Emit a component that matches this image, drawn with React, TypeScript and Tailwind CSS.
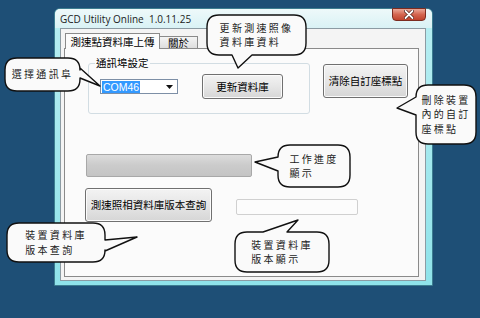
import React from 'react';

type Side = 'top' | 'right' | 'bottom' | 'left';

interface BubbleProps {
    x: number;
    y: number;
    w: number;
    h: number;
    side: Side;
    b1: number;
    b2: number;
    tip: [number, number];
    lines: string[];
}

const uiFont = { fontFamily: '"Noto Sans CJK TC", "Noto Sans", sans-serif' };

// rounded box with a wedge tail on one side
function bubblePath(w: number, h: number, r: number, side: Side, b1: number, b2: number, tx: number, ty: number) {
    let d = `M ${r} 0 `;
    if (side === 'top') d += `L ${b1} 0 L ${tx} ${ty} L ${b2} 0 `;
    d += `L ${w - r} 0 Q ${w} 0 ${w} ${r} `;
    if (side === 'right') d += `L ${w} ${b1} L ${tx} ${ty} L ${w} ${b2} `;
    d += `L ${w} ${h - r} Q ${w} ${h} ${w - r} ${h} `;
    if (side === 'bottom') d += `L ${b2} ${h} L ${tx} ${ty} L ${b1} ${h} `;
    d += `L ${r} ${h} Q 0 ${h} 0 ${h - r} `;
    if (side === 'left') d += `L 0 ${b2} L ${tx} ${ty} L 0 ${b1} `;
    d += `L 0 ${r} Q 0 0 ${r} 0 Z`;
    return d;
}

function Bubble({ x, y, w, h, side, b1, b2, tip, lines }: BubbleProps) {
    return (
        <div className="absolute z-20" style={{ left: x, top: y, width: w, height: h }}>
            <svg className="absolute left-0 top-0 overflow-visible" width={w} height={h}>
                <path
                    d={bubblePath(w, h, 12, side, b1, b2, tip[0], tip[1])}
                    fill="#fafafa"
                    stroke="#111"
                    strokeWidth={1.4}
                    strokeLinejoin="round"
                />
            </svg>
            <div className="relative flex h-full w-full items-center justify-center">
                <div className="text-[10px] leading-[14.5px] tracking-[2.3px] text-[#1a1a1a]" style={uiFont}>
                    {lines.map((l) => (
                        <div key={l}>{l}</div>
                    ))}
                </div>
            </div>
        </div>
    );
}

function WinButton({ label, className }: { label: string; className: string }) {
    return (
        <div
            className={`flex items-center justify-center rounded-[3px] border border-[#707070] bg-gradient-to-b from-[#f3f3f3] via-[#e6e6e6] to-[#d6d6d6] text-[10.5px] text-black shadow-[inset_0_0_0_1px_#fbfbfb] ${className}`}
            style={uiFont}
        >
            {label}
        </div>
    );
}

export default function App() {
    return (
        <div className="relative h-[318px] w-[480px] overflow-hidden bg-[#1e4f76] pl-[54px] pt-[8px]">
            {/* window frame */}
            <div className="flex h-[278px] w-[379px] flex-col rounded-t-[6px] border border-[#3d7d90] bg-gradient-to-b from-[#b8eef2] to-[#8fe3ea]">
                {/* title bar */}
                <div className="flex h-[19px] justify-between rounded-t-[5px] bg-gradient-to-b from-[#eef9fa] to-[#d9f2f5] pl-[5px]">
                    <span
                        className="whitespace-pre pt-[3px] text-[10px] leading-[14px] text-[#1b1b1b]"
                        style={{ fontFamily: '"Open Sans", "Noto Sans", sans-serif' }}
                    >
                        GCD Utility Online  1.0.11.25
                    </span>
                    <div className="-mt-px mr-[6px] flex h-[13px] w-[34px] items-center justify-center rounded-b-[4px] border border-[#7b2c20] bg-gradient-to-b from-[#eaa797] via-[#d4654f] to-[#c0432c]">
                        <svg width="10" height="9" viewBox="0 0 10 9">
                            <path d="M1.5 1 L8.5 8 M8.5 1 L1.5 8" stroke="#4a1a12" strokeWidth="3.2" strokeLinecap="round" />
                            <path d="M1.5 1 L8.5 8 M8.5 1 L1.5 8" stroke="#ffffff" strokeWidth="1.8" strokeLinecap="round" />
                        </svg>
                    </div>
                </div>

                {/* client area */}
                <div className="ml-[5px] flex h-[253px] w-[366px] flex-col border border-[#8c9ba3] bg-[#f4f4f4] pl-[3px] pt-[4px]">
                    {/* tab strip */}
                    <div className="flex h-[15px] items-end pl-px text-[10.5px] text-black" style={uiFont}>
                        <div className="relative z-10 -mb-px flex h-[16px] w-[95px] items-center justify-center border border-b-0 border-[#8a8a8a] bg-[#fbfbfb] leading-[12px]">
                            測速點資料庫上傳
                        </div>
                        <div className="flex h-[12px] w-[38px] items-center justify-center border border-l-0 border-b-0 border-[#8a8a8a] bg-gradient-to-b from-[#f4f4f4] to-[#dedede] leading-[11px]">
                            關於
                        </div>
                    </div>

                    {/* tab pane */}
                    <div className="h-[229px] w-[355px] border border-[#8a8a8a] bg-[#fbfbfb]">
                        <div className="flex items-start">
                            <div className="ml-[23px] mt-[14px] h-[51px] w-[222px] rounded-[3px] border border-[#d2dde3]">
                                <div
                                    className="-mt-[7px] ml-[6px] w-fit bg-[#fbfbfb] px-px text-[10.5px] leading-[12px] text-black"
                                    style={uiFont}
                                >
                                    通訊埠設定
                                </div>
                                <div className="flex items-start">
                                    <div className="ml-[11px] mt-[10px] flex h-[15px] w-[78px] items-center justify-between border border-[#7d8fa6] bg-white pl-px pr-[4px]">
                                        <span
                                            className="bg-[#3399ff] px-px text-[10.5px] leading-[12px] text-white"
                                            style={{ fontFamily: '"Liberation Sans", sans-serif' }}
                                        >
                                            COM46
                                        </span>
                                        <svg width="7" height="4" viewBox="0 0 7 4">
                                            <path d="M0 0 H7 L3.5 4 Z" fill="#111" />
                                        </svg>
                                    </div>
                                    <WinButton label="更新資料庫" className="ml-[24px] mt-[5px] h-[25px] w-[81px]" />
                                </div>
                            </div>
                            <WinButton label="清除自訂座標點" className="ml-[13px] mt-[15px] h-[34px] w-[85px]" />
                        </div>

                        {/* progress bar */}
                        <div className="ml-[21px] mt-[40px] h-[23px] w-[166px] rounded-[2px] border border-[#a8a8a8] bg-gradient-to-b from-[#dcdcdc] via-[#cbcbcb] to-[#c4c4c4]" />

                        <div className="flex items-start">
                            <WinButton label="測速照相資料庫版本查詢" className="ml-[20px] mt-[11px] h-[34px] w-[127px]" />
                            <div className="ml-[24px] mt-[22px] h-[16px] w-[122px] rounded-[2px] border border-[#d0d0d0] bg-[#fcfcfc]" />
                        </div>
                    </div>
                </div>
            </div>

            <Bubble x={5} y={58} w={75} h={33} side="right" b1={10} b2={20} tip={[95, 28]} lines={['選擇通訊阜']} />
            <Bubble x={207} y={15} w={99} h={40} side="bottom" b1={25} b2={45} tip={[31, 53]} lines={['更新測速照像', '資料庫資料']} />
            <Bubble x={416} y={85} w={60} h={59} side="left" b1={12} b2={30} tip={[-19, 23]} lines={['刪除裝置', '內的自訂', '座標點']} />
            <Bubble x={278} y={145} w={72} h={42} side="left" b1={12} b2={26} tip={[-23, 17]} lines={['工作進度', '顯示']} />
            <Bubble x={7} y={223} w={98} h={39} side="right" b1={17} b2={28} tip={[130, 14]} lines={['裝置資料庫', '版本查詢']} />
            <Bubble x={235} y={232} w={94} h={40} side="top" b1={28} b2={52} tip={[63, -12]} lines={['裝置資料庫', '版本顯示']} />
        </div>
    );
}
